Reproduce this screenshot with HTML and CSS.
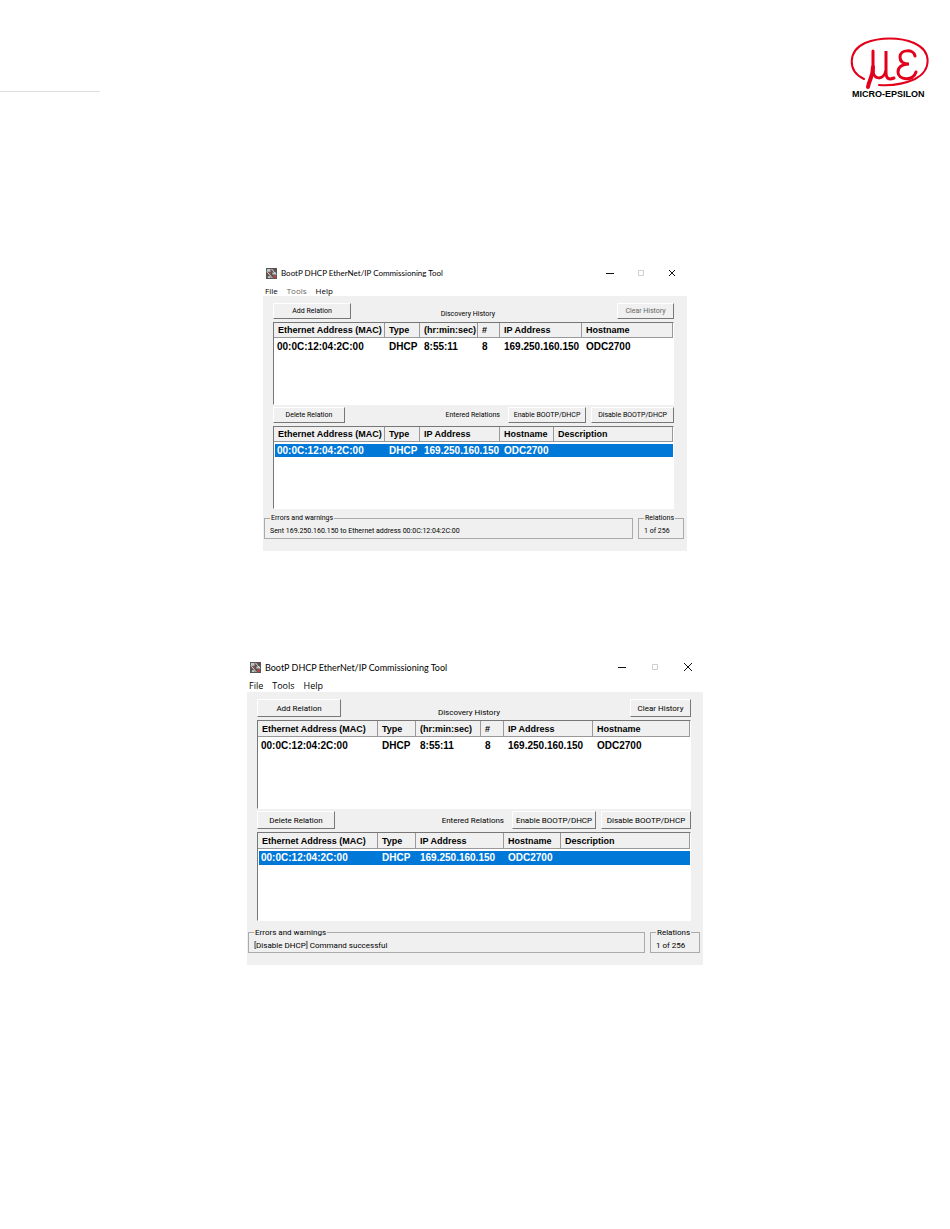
FILE: index.html
```html
<!DOCTYPE html>
<html lang="en">
<head>
    <meta charset="UTF-8">
    <meta name="viewport" content="width=device-width, initial-scale=1.0">
    <title>BootP DHCP EtherNet/IP Commissioning Tool</title>
    <link rel="stylesheet" href="styles.css">
</head>
<body>
    <header class="page-header">
        <hr class="header-line">
        <svg class="logo" viewBox="0 0 80 62" role="img" aria-label="Micro-Epsilon">
            <g fill="none" stroke="#e3001b" stroke-linecap="round">
                <path d="M14 42C-3 34-2 14 15 6C30 0 50 0 64 6C82 14 82 33 65 42C54 47 42 49 29 48" stroke-width="2"/>
                <path d="M23 14V33C23 43 34 44 36 33V14V35C36 42 39 43 44 41" stroke-width="3"/>
                <path d="M23 30C23 40 19 43 18 50" stroke-width="4"/>
                <path d="M65 19C64 12 50 12 50 20C50 25 54 27 59 27C52 27 48 30 48 35C48 43 63 45 66 35" stroke-width="3"/>
            </g>
            <text class="logo-name" x="2" y="60">MICRO-EPSILON</text>
        </svg>
    </header>

    <main>
        <section class="tool-window">
            <div class="title-bar">
                <svg class="app-icon" viewBox="0 0 12 12" aria-hidden="true">
                    <rect width="12" height="12" fill="#555"/>
                    <path d="M1 1h4v3H1z M7 5h4v2H7z M2 9h3v2H2z" fill="#b9cfc6"/>
                    <path d="M5 1h3v2H5z M3 5h2v3H3z M8 8h3v3H8z" fill="#b4474b"/>
                    <path d="M1 4l6 7 M6 1l5 6" stroke="#ddd" fill="none"/>
                </svg>
                <h2>BootP DHCP EtherNet/IP Commissioning Tool</h2>
                <div class="window-controls">
                    <button aria-label="Minimize"><svg viewBox="0 0 8 8"><path d="M0 4.5h8"/></svg></button>
                    <button aria-label="Maximize" disabled><svg viewBox="0 0 8 8"><path d="M1.5 1.5h5v5h-5z"/></svg></button>
                    <button aria-label="Close"><svg viewBox="0 0 8 8"><path d="M1 1l6 6M7 1l-6 6"/></svg></button>
                </div>
            </div>
            <nav class="menu">
                <button>File</button>
                <button class="dim">Tools</button>
                <button>Help</button>
            </nav>
            <div class="client">
                <div class="toolbar">
                    <button class="btn add">Add Relation</button>
                    <span class="caption history-caption">Discovery History</span>
                    <button class="btn clear dim">Clear History</button>
                </div>
                <div class="list">
                    <table>
                        <colgroup><col class="c-mac"><col class="c-type"><col class="c-time"><col class="c-num"><col class="c-ip"><col></colgroup>
                        <thead>
                            <tr><th>Ethernet Address (MAC)</th><th>Type</th><th>(hr:min:sec)</th><th>#</th><th>IP Address</th><th>Hostname</th></tr>
                        </thead>
                        <tbody>
                            <tr><td>00:0C:12:04:2C:00</td><td>DHCP</td><td>8:55:11</td><td>8</td><td>169.250.160.150</td><td>ODC2700</td></tr>
                        </tbody>
                    </table>
                </div>
                <div class="toolbar">
                    <button class="btn delete">Delete Relation</button>
                    <span class="caption">Entered Relations</span>
                    <button class="btn enable">Enable BOOTP/DHCP</button>
                    <button class="btn disable">Disable BOOTP/DHCP</button>
                </div>
                <div class="list">
                    <table>
                        <colgroup><col class="c-mac"><col class="c-type"><col class="c-address"><col class="c-host"><col></colgroup>
                        <thead>
                            <tr><th>Ethernet Address (MAC)</th><th>Type</th><th>IP Address</th><th>Hostname</th><th>Description</th></tr>
                        </thead>
                        <tbody>
                            <tr class="selected"><td>00:0C:12:04:2C:00</td><td>DHCP</td><td>169.250.160.150</td><td>ODC2700</td><td></td></tr>
                        </tbody>
                    </table>
                </div>
            </div>
            <div class="status">
                <fieldset class="messages">
                    <legend>Errors and warnings</legend>
                    Sent 169.250.160.150 to Ethernet address 00:0C:12:04:2C:00
                </fieldset>
                <fieldset class="count">
                    <legend>Relations</legend>
                    1 of 256
                </fieldset>
            </div>
        </section>

        <section class="tool-window large">
            <div class="title-bar">
                <svg class="app-icon" viewBox="0 0 12 12" aria-hidden="true">
                    <rect width="12" height="12" fill="#555"/>
                    <path d="M1 1h4v3H1z M7 5h4v2H7z M2 9h3v2H2z" fill="#b9cfc6"/>
                    <path d="M5 1h3v2H5z M3 5h2v3H3z M8 8h3v3H8z" fill="#b4474b"/>
                    <path d="M1 4l6 7 M6 1l5 6" stroke="#ddd" fill="none"/>
                </svg>
                <h2>BootP DHCP EtherNet/IP Commissioning Tool</h2>
                <div class="window-controls">
                    <button aria-label="Minimize"><svg viewBox="0 0 8 8"><path d="M0 4.5h8"/></svg></button>
                    <button aria-label="Maximize" disabled><svg viewBox="0 0 8 8"><path d="M1.5 1.5h5v5h-5z"/></svg></button>
                    <button aria-label="Close"><svg viewBox="0 0 8 8"><path d="M0 0l8 8M8 0l-8 8"/></svg></button>
                </div>
            </div>
            <nav class="menu">
                <button>File</button>
                <button>Tools</button>
                <button>Help</button>
            </nav>
            <div class="client">
                <div class="toolbar">
                    <button class="btn add">Add Relation</button>
                    <span class="caption history-caption">Discovery History</span>
                    <button class="btn clear">Clear History</button>
                </div>
                <div class="list">
                    <table>
                        <colgroup><col class="c-mac"><col class="c-type"><col class="c-time"><col class="c-num"><col class="c-ip"><col></colgroup>
                        <thead>
                            <tr><th>Ethernet Address (MAC)</th><th>Type</th><th>(hr:min:sec)</th><th>#</th><th>IP Address</th><th>Hostname</th></tr>
                        </thead>
                        <tbody>
                            <tr><td>00:0C:12:04:2C:00</td><td>DHCP</td><td>8:55:11</td><td>8</td><td>169.250.160.150</td><td>ODC2700</td></tr>
                        </tbody>
                    </table>
                </div>
                <div class="toolbar">
                    <button class="btn delete">Delete Relation</button>
                    <span class="caption">Entered Relations</span>
                    <button class="btn enable">Enable BOOTP/DHCP</button>
                    <button class="btn disable">Disable BOOTP/DHCP</button>
                </div>
                <div class="list">
                    <table>
                        <colgroup><col class="c-mac"><col class="c-type"><col class="c-address"><col class="c-host"><col></colgroup>
                        <thead>
                            <tr><th>Ethernet Address (MAC)</th><th>Type</th><th>IP Address</th><th>Hostname</th><th>Description</th></tr>
                        </thead>
                        <tbody>
                            <tr class="selected"><td>00:0C:12:04:2C:00</td><td>DHCP</td><td>169.250.160.150</td><td>ODC2700</td><td></td></tr>
                        </tbody>
                    </table>
                </div>
            </div>
            <div class="status">
                <fieldset class="messages">
                    <legend>Errors and warnings</legend>
                    [Disable DHCP] Command successful
                </fieldset>
                <fieldset class="count">
                    <legend>Relations</legend>
                    1 of 256
                </fieldset>
            </div>
        </section>
    </main>
</body>
</html>
```
FILE: styles.css
```css
* {
    box-sizing: border-box;
}
body {
    margin: 0;
    background: #fff;
    color: #000;
    font-family: Roboto, sans-serif;
}
button {
    margin: 0;
    padding: 0;
    border: none;
    background: none;
    color: inherit;
    font: inherit;
}
.page-header {
    display: flex;
    justify-content: space-between;
    align-items: flex-end;
    padding: 37px 20px 0 0;
}
.header-line {
    width: 100px;
    margin: 0 0 7px;
    border: none;
    border-top: 1px solid #ddd;
}
.logo {
    width: 80px;
    height: 62px;
}
.logo-name {
    font: bold 9px "Liberation Sans", sans-serif;
}
main {
    display: flex;
    flex-direction: column;
    align-items: center;
    gap: 105px;
    padding: 163px 20px 40px;
}

/* window: sizes are set here, .large overrides them */
.tool-window {
    --row: 16px;
    --list: 83px;
    --header: 15px;
    --line: 15px;
    --mac: 111px;
    --type: 35px;
    --time: 58px;
    --num: 22px;
    --ip: 82px;
    --host: 54px;
    --add: 78px;
    --delete: 72px;
    --enable: 78px;
    --disable: 83px;
    --clear: 57px;
    --count: 46px;
    --history-gap: 117px;
    --side: 13px;
    --status-gap: 2px;
    --text: 7px;
    --head: 9px;
    --data: 10px;
    --title: 8px;
    width: 100%;
    max-width: 424px;
    background: #f0f0f0;
    font-size: var(--text);
}
.tool-window.large {
    --row: 18px;
    --list: 89px;
    --header: 16px;
    --line: 16px;
    --mac: 120px;
    --type: 38px;
    --time: 65px;
    --num: 23px;
    --ip: 89px;
    --host: 57px;
    --add: 84px;
    --delete: 78px;
    --enable: 84px;
    --disable: 90px;
    --clear: 61px;
    --count: 50px;
    --history-gap: 125px;
    --side: 12px;
    --status-gap: 4px;
    --text: 8px;
    --title: 9px;
    max-width: 456px;
}
.title-bar {
    display: flex;
    align-items: center;
    height: 22px;
    padding: 0 11px 0 3px;
    background: #fff;
}
.app-icon {
    width: 11px;
    height: 11px;
    margin-right: 4px;
}
.title-bar h2 {
    margin: 0;
    font: var(--title) Lato, sans-serif;
}
.window-controls {
    display: flex;
    gap: 23px;
    margin-left: auto;
}
.window-controls button {
    width: 8px;
    height: 8px;
}
.large .window-controls {
    gap: 25px;
}
.window-controls svg {
    display: block;
    width: 8px;
    height: 8px;
    fill: none;
    stroke: #111;
}
.window-controls button:disabled {
    opacity: 0.2;
}
.menu {
    display: flex;
    gap: 9px;
    height: 12px;
    padding-left: 2px;
    background: #fff;
    font: var(--title) "Open Sans", sans-serif;
}
.large .menu {
    height: 14px;
}
.dim {
    color: #666;
}
.client {
    padding: 7px var(--side) 0 10px;
}
.toolbar {
    display: flex;
    align-items: center;
    gap: 5px;
    height: var(--row);
}
.btn {
    height: 100%;
    border: 1px solid #fff;
    border-right-color: #777;
    border-bottom-color: #777;
    background: #f0f0f0;
    white-space: nowrap;
}
.add {
    width: var(--add);
}
.clear {
    width: var(--clear);
}
.delete {
    width: var(--delete);
}
.enable {
    width: var(--enable);
}
.disable {
    width: var(--disable);
}
.caption {
    margin-left: auto;
    margin-right: 3px;
    white-space: nowrap;
}
.history-caption {
    align-self: flex-end;
    margin-right: var(--history-gap);
    line-height: 9px;
}
.list {
    height: var(--list);
    margin: 3px 0 2px;
    border: 1px solid #fff;
    border-top-color: #777;
    border-left-color: #777;
    background: #fff;
}
table {
    width: 100%;
    table-layout: fixed;
    border-collapse: separate;
    border-spacing: 0;
    font-family: "Liberation Sans", sans-serif;
    font-weight: bold;
    text-align: left;
    white-space: nowrap;
}
.c-mac {
    width: var(--mac);
}
.c-type {
    width: var(--type);
}
.c-time {
    width: var(--time);
}
.c-num {
    width: var(--num);
}
.c-ip {
    width: var(--ip);
}
.c-address {
    width: calc(var(--num) + var(--time));
}
.c-host {
    width: var(--host);
}
th {
    height: var(--header);
    padding: 0 0 0 4px;
    border-right: 1px solid #999;
    border-bottom: 1px solid #999;
    background: #f0f0f0;
    font-size: var(--head);
    line-height: 12px;
}
td {
    height: var(--line);
    padding: 0 0 0 4px;
    border-top: 2px solid #fff;
    font-size: var(--data);
    line-height: 12px;
}
td:first-child {
    padding-left: 2px;
    border-left: 1px solid #fff;
}
.selected td {
    background: #0078d7;
    color: #fff;
}
.status {
    display: flex;
    gap: 5px;
    padding: var(--status-gap) 3px 12px 1px;
}
fieldset {
    min-width: 0;
    height: 26px;
    margin: 0;
    padding: 2px 5px 0;
    border: 1px solid #aaa;
    line-height: 11px;
    white-space: nowrap;
}
legend {
    padding: 0 1px;
}
.messages {
    flex: 1;
}
.count {
    width: var(--count);
}
```
